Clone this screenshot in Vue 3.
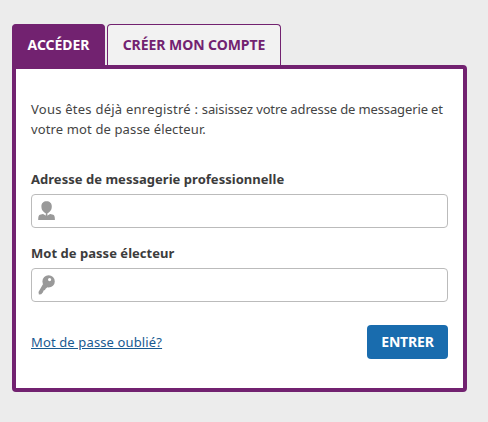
<template>
  <main class="login">
    <nav class="tabs">
      <button
        v-for="tab in tabs"
        :key="tab.id"
        type="button"
        :class="['tab', `tab-${tab.id}`, { 'tab-active': activeTab === tab.id }]"
        @click="activeTab = tab.id"
      >
        <span>{{ tab.label }}</span>
      </button>
    </nav>

    <form class="panel" @submit.prevent>
      <p class="intro">
        <span class="intro-lead">Vous êtes déjà enregistré : </span><span class="intro-first">saisissez votre adresse de messagerie et</span><br>
        <span class="intro-second">votre mot de passe électeur.</span>
      </p>

      <label class="label" for="email">Adresse de messagerie professionnelle</label>
      <div class="field">
        <svg class="field-icon" viewBox="0 0 18 20" aria-hidden="true">
          <path d="M8.6 0.3C11.8 0.3 13.8 2.3 13.8 5.4C13.8 8 12.9 9.6 11.6 10.7C10.4 11.8 9.6 12.2 8.6 12.2C7.6 12.2 6.8 11.8 5.6 10.7C4.3 9.6 3.4 8 3.4 5.4C3.4 2.3 5.4 0.3 8.6 0.3Z" />
          <path d="M7.8 11.5H9.4V15H7.8Z" />
          <path d="M5 13L8.6 15L12.2 13L15.2 13.8C16.4 14.4 16.9 15.6 16.9 19H0.2C0.2 15.6 0.7 14.4 1.9 13.8Z" />
        </svg>
        <input id="email" v-model="email" type="text">
      </div>

      <label class="label" for="password">Mot de passe électeur</label>
      <div class="field">
        <svg class="field-icon" viewBox="0 0 18 20" aria-hidden="true">
          <path fill-rule="evenodd" d="M10.6 0.2A6.2 6.2 0 1 1 10.6 12.6A6.2 6.2 0 1 1 10.6 0.2ZM11.6 3A1.6 1.6 0 1 0 11.6 6.2A1.6 1.6 0 0 0 11.6 3Z" />
          <path d="M5.2 8.8L9.4 12.2L7.6 13.8L7 15L5.6 15.6L5 17.2L3.2 19.2L0.9 19.4L0.5 17Z" />
        </svg>
        <input id="password" v-model="password" type="password">
      </div>

      <div class="actions">
        <a class="forgot" href="#">Mot de passe oublié?</a>
        <button type="submit" class="submit">ENTRER</button>
      </div>
    </form>
  </main>
</template>

<script setup>
import { ref } from 'vue';

const tabs = [
  { id: 'login', label: 'ACCÉDER' },
  { id: 'register', label: 'CRÉER MON COMPTE' }
];

const activeTab = ref('login');
const email = ref('');
const password = ref('');
</script>

<style>
body {
  background: #ececec;
}
</style>

<style scoped>
.login {
  box-sizing: border-box;
  height: 422px;
  padding: 24px 21px 30px 12px;
  font-family: 'Noto Sans', 'Open Sans', sans-serif;
  font-size: 13px;
  color: #444;
}

.tabs {
  display: flex;
  gap: 2px;
  height: 41px;
}

.tab {
  box-sizing: border-box;
  padding: 0;
  border: 1px solid #722270;
  border-bottom: 0;
  border-radius: 4px 4px 0 0;
  background: #f2f2f2;
  color: #722270;
  font: bold 14px/20px 'Noto Sans', 'Open Sans', sans-serif;
  letter-spacing: -0.06px;
  white-space: nowrap;
  cursor: pointer;
}

.tab-login {
  width: 93px;
}

.tab-register {
  width: 174px;
}

.tab-active {
  background: #722270;
  color: #fff;
}

.panel {
  box-sizing: border-box;
  height: 327px;
  padding: 30px 15px;
  border: 4px solid #722270;
  border-radius: 0 4px 4px 4px;
  background: #fff;
}

.intro {
  margin: 0 0 30px;
  line-height: 20px;
  white-space: nowrap;
}

.intro-lead {
  letter-spacing: 0.24px;
}

.intro-first {
  letter-spacing: -0.13px;
}

.intro-second {
  letter-spacing: 0.13px;
}

.label {
  display: block;
  height: 20px;
  margin-bottom: 5px;
  color: #3c3c3c;
  font-weight: bold;
  line-height: 20px;
  letter-spacing: 0.03px;
}

.field {
  display: flex;
  box-sizing: border-box;
  align-items: center;
  height: 34px;
  margin-bottom: 15px;
  padding-left: 6px;
  border: 1px solid #bbb;
  border-radius: 4px;
}

.field-icon {
  width: 18px;
  height: 20px;
  fill: #999;
}

.field input {
  flex: 1;
  min-width: 0;
  border: 0;
  outline: 0;
  background: transparent;
  font: inherit;
}

.actions {
  display: flex;
  align-items: center;
  justify-content: space-between;
  margin-top: 23px;
}

.forgot {
  color: #185a91;
  letter-spacing: 0.13px;
  text-decoration: underline;
}

.submit {
  width: 81px;
  height: 34px;
  padding: 0;
  border: 0;
  border-radius: 4px;
  background: #196cae;
  color: #fff;
  font: bold 14px/20px 'Noto Sans', 'Open Sans', sans-serif;
  letter-spacing: -0.15px;
  cursor: pointer;
}
</style>
